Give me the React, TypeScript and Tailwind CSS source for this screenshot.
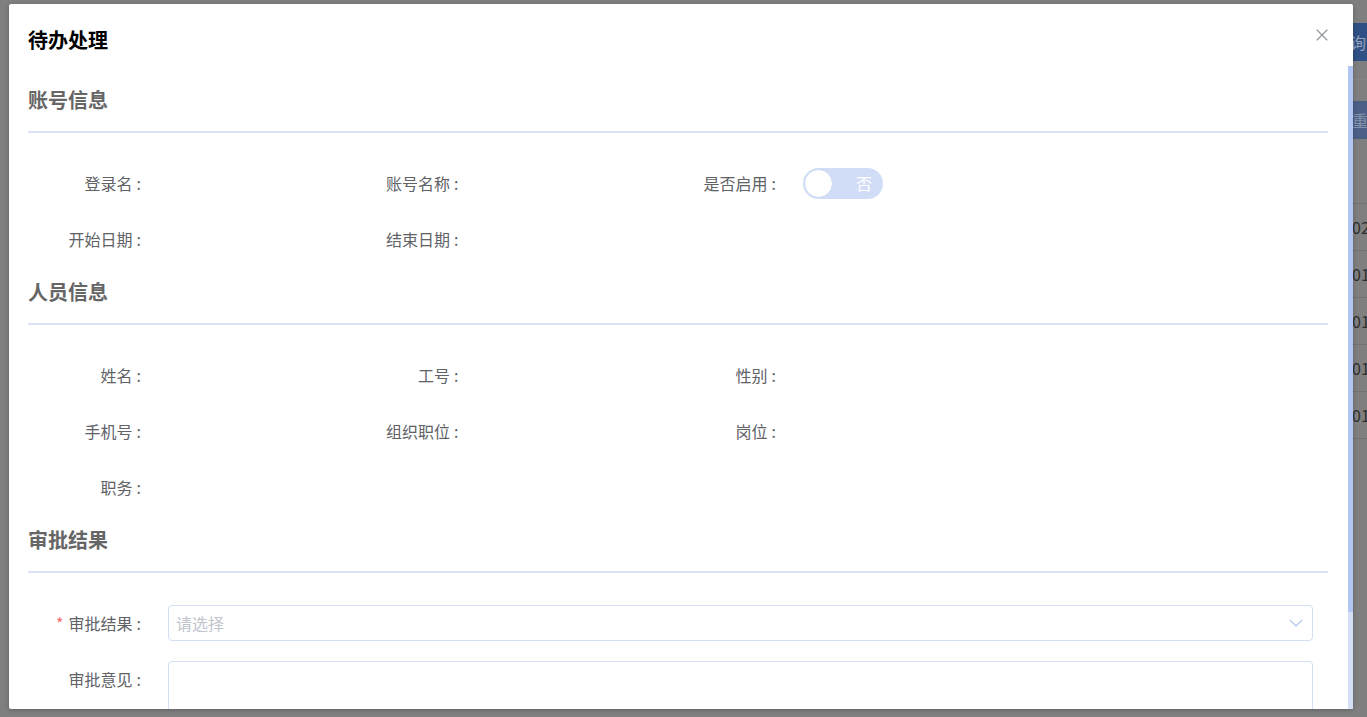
import { X } from 'lucide-react';

const font = { fontFamily: '"Noto Sans CJK SC", "Noto Sans", sans-serif' };

function Field({ label, children }: { label: string; children?: React.ReactNode }) {
    return (
        <div className="flex items-center h-9 mb-5">
            <div className="w-[113px] shrink-0 text-right text-base text-[#606266] leading-9">
                {label}
                <span className="ml-[4px]">:</span>
            </div>
            <div className="ml-[27px] flex items-center">{children}</div>
        </div>
    );
}

function Section({ title }: { title: string }) {
    return (
        <div className="pt-[3px]">
            <h3 className="text-xl font-bold text-[#666666] leading-6">{title}</h3>
            <div className="mt-[19px] h-[2px] bg-[#dae3f5]" />
            <div className="h-[32px]" />
        </div>
    );
}

function Toggle() {
    return (
        <div className="w-[80px] h-[31px] rounded-full bg-[#d1ddf7] flex items-center justify-between px-[1px]">
            <div className="w-[29px] h-[29px] rounded-full bg-white border border-[#c9d7f3]" />
            <span className="text-base text-white pr-[10px] leading-none">否</span>
        </div>
    );
}

export default function App() {
    const rows = ['02', '01', '01', '01', '01'];

    return (
        <div className="relative w-[1367px] h-[717px] overflow-hidden bg-[#7f7f7f]" style={font}>
            {/* page behind the mask */}
            <div className="pl-[1322px] pt-[23px]">
                <div className="w-[100px] h-[38px] bg-[#2f5084] text-[#95a3bd] text-base flex items-center pl-[12px]">
                    查询
                </div>
                <div className="h-[19px] border-b border-[#848484]" />
                <div className="mt-[21px] w-[100px] h-[38px] bg-[#4b5f87] text-[#8593ad] text-base flex items-center pl-[30px]">
                    重置
                </div>
                <div className="mt-[18px] h-[47px] border-b border-[#727272]" />
                {rows.map((r, i) => (
                    <div
                        key={i}
                        className="h-[47px] border-b border-[#727272] flex items-center pl-[30px] text-base text-[#2e2e2e]"
                    >
                        {r}
                    </div>
                ))}
            </div>

            {/* dialog */}
            <div className="absolute left-[9px] top-[4px] w-[1344px] h-[705px] bg-white rounded-[2px] shadow-[0_1px_4px_rgba(0,0,0,0.25)] flex flex-col">
                <div className="h-[62px] shrink-0 pt-[24px] pl-[19px] pr-[21px] flex justify-between">
                    <h2 className="text-xl font-bold text-black leading-6">待办处理</h2>
                    <X className="w-[20px] h-[20px] text-[#909399] mt-[-3px]" strokeWidth={1.3} />
                </div>

                <div className="flex-1 flex overflow-hidden">
                    <div className="flex-1 overflow-hidden pl-[19px] pr-[20px] pt-[19px]">
                        <Section title="账号信息" />
                        <div className="w-[1270px] grid grid-cols-4">
                            <Field label="登录名" />
                            <Field label="账号名称" />
                            <Field label="是否启用">
                                <Toggle />
                            </Field>
                            <div />
                            <Field label="开始日期" />
                            <Field label="结束日期" />
                        </div>

                        <Section title="人员信息" />
                        <div className="w-[1270px] grid grid-cols-4">
                            <Field label="姓名" />
                            <Field label="工号" />
                            <Field label="性别" />
                            <div />
                            <Field label="手机号" />
                            <Field label="组织职位" />
                            <Field label="岗位" />
                            <div />
                            <Field label="职务" />
                        </div>

                        <Section title="审批结果" />
                        <div className="mr-[15px]">
                            <div className="flex items-center h-9 mb-5">
                                <div className="w-[113px] shrink-0 text-right text-base text-[#606266] leading-9">
                                    <span className="text-[#f56c6c] mr-[5px]">*</span>
                                    审批结果
                                    <span className="ml-[4px]">:</span>
                                </div>
                                <div className="ml-[27px] flex-1 h-9 border border-[#d3def5] rounded-[4px] flex items-center justify-between pl-[7px] pr-[8px]">
                                    <span className="text-base text-[#c0c4cc]">请选择</span>
                                    <svg width="14" height="8" viewBox="0 0 14 8" fill="none" className="mr-[1px]">
                                        <path d="M1 1l6 6 6-6" stroke="#b7c7ec" strokeWidth="1.3" />
                                    </svg>
                                </div>
                            </div>
                            <div className="flex items-start mb-5">
                                <div className="w-[113px] shrink-0 text-right text-base text-[#606266] leading-9">
                                    审批意见
                                    <span className="ml-[4px]">:</span>
                                </div>
                                <div className="ml-[27px] flex-1 h-[100px] border border-[#d3def5] rounded-[4px]" />
                            </div>
                        </div>
                    </div>

                    {/* scrollbar */}
                    <div className="w-[5px] shrink-0 bg-[#d4dff5]">
                        <div className="h-[546px] bg-[#b1c6f2]" />
                    </div>
                </div>
            </div>
        </div>
    );
}
